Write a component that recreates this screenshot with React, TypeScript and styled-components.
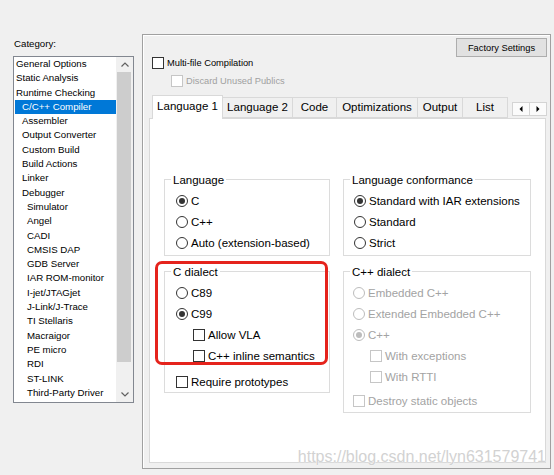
import React from "react";
import styled, { createGlobalStyle } from "styled-components";

const GlobalStyle = createGlobalStyle`
  html, body {
    margin: 0;
    padding: 0;
    background: #f0f0f0;
  }
  body {
    font-family: "Liberation Sans", Arial, sans-serif;
    color: #000;
  }
`;

const Window = styled.div`
  width: 554px;
  height: 475px;
  box-sizing: border-box;
  display: flex;
  padding-top: 34px;
  overflow: hidden;
  background: #f0f0f0;
`;

/* ---------- left category list ---------- */

const Sidebar = styled.div`
  width: 142px;
  flex: none;
  padding-left: 13px;
  box-sizing: border-box;
  display: flex;
  flex-direction: column;
`;

const CategoryLabel = styled.div`
  height: 22px;
  box-sizing: border-box;
  padding: 4px 0 0 1px;
  font-size: 9.7px;
  line-height: 12px;
`;

const ListBox = styled.div`
  width: 121px;
  height: 347px;
  box-sizing: border-box;
  border: 1px solid #828790;
  background: #fff;
  display: flex;
`;

const Items = styled.div`
  flex: 1;
  overflow: hidden;
`;

const Item = styled.div<{ $level: number; $selected?: boolean }>`
  height: 14.3px;
  line-height: 14.3px;
  margin-left: 1px;
  padding-left: ${(p) => 1 + p.$level * 6 - (p.$level === 2 ? 1 : 0)}px;
  font-size: 9.7px;
  white-space: nowrap;
  background: ${(p) => (p.$selected ? "#0078d7" : "transparent")};
  color: ${(p) => (p.$selected ? "#fff" : "#000")};
`;

const ScrollBar = styled.div`
  width: 17px;
  flex: none;
  background: #f0f0f0;
  display: flex;
  flex-direction: column;
`;

const ScrollArrow = styled.div`
  height: 15px;
  display: flex;
  align-items: center;
  justify-content: center;
  flex: none;
`;

const Thumb = styled.div`
  height: 290px;
  margin: 0 2px 0 1px;
  background: #cdcdcd;
  flex: none;
`;

const Track = styled.div`
  flex: 1;
`;

/* ---------- right options panel ---------- */

const Panel = styled.div`
  position: relative;
  width: 409px;
  height: 435px;
  box-sizing: border-box;
  border: 1px solid #a0a0a0;
  box-shadow: inset 1px 1px 0 #fff;
  padding: 3px 3px 0 6px;
  display: flex;
  flex-direction: column;
`;

const TopRow = styled.div`
  display: flex;
  justify-content: space-between;
  align-items: flex-start;
  padding-left: 3px;
`;

const TopOptions = styled.div`
  padding-top: 18px;
  display: flex;
  flex-direction: column;
  gap: 5px;
`;

const TopCheck = styled.label<{ $indent?: number; $disabled?: boolean }>`
  height: 13px;
  display: flex;
  align-items: center;
  gap: 3px;
  padding-left: ${(p) => p.$indent || 0}px;
  font-size: 9.3px;
  color: ${(p) => (p.$disabled ? "#a0a0a0" : "#000")};
`;

const FactoryButton = styled.button`
  width: 91px;
  height: 19px;
  box-sizing: border-box;
  border: 1px solid #adadad;
  background: #e1e1e1;
  font-family: "Liberation Sans", Arial, sans-serif;
  font-size: 9.3px;
  color: #000;
  padding: 0;
`;

const TabStrip = styled.div`
  position: relative;
  height: 23px;
  margin: 8px 1px 0 0;
  padding-left: 4px;
  display: flex;
  align-items: flex-end;
`;

const Tab = styled.div<{ $width: number; $active?: boolean }>`
  width: ${(p) => p.$width}px;
  height: ${(p) => (p.$active ? 24 : 21)}px;
  box-sizing: border-box;
  margin-left: -1px;
  margin-bottom: ${(p) => (p.$active ? -1 : 0)}px;
  position: relative;
  z-index: ${(p) => (p.$active ? 1 : 0)};
  border: 1px solid #d9d9d9;
  border-bottom: ${(p) => (p.$active ? "none" : "1px solid #d9d9d9")};
  background: ${(p) => (p.$active ? "#fff" : "#f0f0f0")};
  font-size: 11.5px;
  line-height: ${(p) => (p.$active ? 20 : 19)}px;
  text-align: center;
  white-space: nowrap;
  flex: none;
`;

const TabArrows = styled.div`
  position: absolute;
  right: -1px;
  top: 7px;
  display: flex;
  z-index: 2;
`;

const ArrowButton = styled.div`
  width: 18px;
  height: 14px;
  box-sizing: border-box;
  border: 1px solid #d4d4d4;
  margin-left: -1px;
  background: #fbfbfb;
  display: flex;
  align-items: center;
  justify-content: center;
`;

const Pane = styled.div`
  height: 345px;
  margin-right: 1px;
  box-sizing: border-box;
  border: 1px solid #d9d9d9;
  background: #fff;
  display: grid;
  grid-template-columns: 166px 188px;
  column-gap: 13px;
  align-items: start;
  padding: 60px 0 0 14px;
`;

const Column = styled.div`
  display: flex;
  flex-direction: column;
  gap: 15px;
`;

const Group = styled.div<{ $padBottom: number }>`
  position: relative;
  border: 1px solid #dcdcdc;
  display: flex;
  flex-direction: column;
  padding-bottom: ${(p) => p.$padBottom}px;
`;

const Legend = styled.div`
  align-self: flex-start;
  margin: -7px 0 3px 6px;
  padding: 0 2px;
  background: #fff;
  font-size: 11.5px;
  line-height: 14px;
`;

const Row = styled.label<{ $indent: number; $disabled?: boolean; $gapTop?: number }>`
  height: 21px;
  display: flex;
  align-items: center;
  gap: 3px;
  padding-left: ${(p) => p.$indent}px;
  margin-top: ${(p) => p.$gapTop || 0}px;
  font-size: 11.5px;
  white-space: nowrap;
  color: ${(p) => (p.$disabled ? "#a3a3a3" : "#000")};
`;

const RadioCircle = styled.span<{ $checked?: boolean; $disabled?: boolean }>`
  width: 12px;
  height: 12px;
  flex: none;
  box-sizing: border-box;
  border-radius: 50%;
  border: 1px solid ${(p) => (p.$disabled ? "#bcbcbc" : "#333")};
  background: #fff;
  display: flex;
  align-items: center;
  justify-content: center;
  &::after {
    content: "";
    display: ${(p) => (p.$checked ? "block" : "none")};
    width: 6px;
    height: 6px;
    border-radius: 50%;
    background: ${(p) => (p.$disabled ? "#bcbcbc" : "#333")};
  }
`;

const CheckBox = styled.span<{ $disabled?: boolean; $size?: number }>`
  width: ${(p) => p.$size || 12}px;
  height: ${(p) => p.$size || 12}px;
  flex: none;
  box-sizing: border-box;
  border: 1px solid ${(p) => (p.$disabled ? "#c6c6c6" : "#333")};
  background: #fff;
`;

const Highlight = styled.div`
  position: absolute;
  left: -10px;
  top: -11px;
  width: 173px;
  height: 104px;
  box-sizing: border-box;
  border: 3px solid #e5231c;
  border-radius: 7px;
  pointer-events: none;
`;

const Watermark = styled.div`
  position: absolute;
  right: 4px;
  bottom: 2px;
  font-size: 16px;
  line-height: 18px;
  color: #d2d2d2;
  text-shadow: 0 0 1px #fff, 0 0 1px #fff;
  white-space: nowrap;
  pointer-events: none;
`;

/* ---------- small drawings ---------- */

const Chevron: React.FC<{ up?: boolean }> = ({ up }) => (
  <svg width="8" height="5" viewBox="0 0 8 5">
    <path
      d={up ? "M0.5 4.5 L4 1 L7.5 4.5" : "M0.5 0.5 L4 4 L7.5 0.5"}
      fill="none"
      stroke="#606060"
      strokeWidth="1.2"
    />
  </svg>
);

const Triangle: React.FC<{ left?: boolean }> = ({ left }) => (
  <svg width="4" height="6" viewBox="0 0 4 6">
    <path d={left ? "M3.5 0 L0.5 3 L3.5 6 Z" : "M0.5 0 L3.5 3 L0.5 6 Z"} fill="#000" />
  </svg>
);

const Radio: React.FC<{ label: string; checked?: boolean; disabled?: boolean; indent: number }> = ({
  label,
  checked,
  disabled,
  indent,
}) => (
  <Row $indent={indent} $disabled={disabled}>
    <RadioCircle $checked={checked} $disabled={disabled} />
    {label}
  </Row>
);

const Check: React.FC<{ label: string; disabled?: boolean; indent: number; gapTop?: number }> = ({
  label,
  disabled,
  indent,
  gapTop,
}) => (
  <Row $indent={indent} $disabled={disabled} $gapTop={gapTop}>
    <CheckBox $disabled={disabled} />
    {label}
  </Row>
);

const categories: [string, number][] = [
  ["General Options", 0],
  ["Static Analysis", 0],
  ["Runtime Checking", 0],
  ["C/C++ Compiler", 1],
  ["Assembler", 1],
  ["Output Converter", 1],
  ["Custom Build", 1],
  ["Build Actions", 1],
  ["Linker", 1],
  ["Debugger", 1],
  ["Simulator", 2],
  ["Angel", 2],
  ["CADI", 2],
  ["CMSIS DAP", 2],
  ["GDB Server", 2],
  ["IAR ROM-monitor", 2],
  ["I-jet/JTAGjet", 2],
  ["J-Link/J-Trace", 2],
  ["TI Stellaris", 2],
  ["Macraigor", 2],
  ["PE micro", 2],
  ["RDI", 2],
  ["ST-LINK", 2],
  ["Third-Party Driver", 2],
];

const tabs: [string, number][] = [
  ["Language 1", 71],
  ["Language 2", 71],
  ["Code", 45],
  ["Optimizations", 82],
  ["Output", 46],
  ["List", 46],
];

export default function App() {
  return (
    <>
      <GlobalStyle />
      <Window>
        <Sidebar>
          <CategoryLabel>Category:</CategoryLabel>
          <ListBox>
            <Items>
              {categories.map(([name, level]) => (
                <Item key={name} $level={level} $selected={name === "C/C++ Compiler"}>
                  {name}
                </Item>
              ))}
            </Items>
            <ScrollBar>
              <ScrollArrow>
                <Chevron up />
              </ScrollArrow>
              <Thumb />
              <Track />
              <ScrollArrow>
                <Chevron />
              </ScrollArrow>
            </ScrollBar>
          </ListBox>
        </Sidebar>

        <Panel>
          <TopRow>
            <TopOptions>
              <TopCheck>
                <CheckBox $size={12} />
                Multi-file Compilation
              </TopCheck>
              <TopCheck $indent={19} $disabled>
                <CheckBox $size={12} $disabled />
                Discard Unused Publics
              </TopCheck>
            </TopOptions>
            <FactoryButton>Factory Settings</FactoryButton>
          </TopRow>

          <TabStrip>
            {tabs.map(([name, width], i) => (
              <Tab key={name} $width={width} $active={i === 0}>
                {name}
              </Tab>
            ))}
            <TabArrows>
              <ArrowButton>
                <Triangle left />
              </ArrowButton>
              <ArrowButton>
                <Triangle />
              </ArrowButton>
            </TabArrows>
          </TabStrip>

          <Pane>
            <Column>
              <Group $padBottom={2}>
                <Legend>Language</Legend>
                <Radio label="C" checked indent={11} />
                <Radio label="C++" indent={11} />
                <Radio label="Auto (extension-based)" indent={11} />
              </Group>
              <Group $padBottom={0}>
                <Legend>C dialect</Legend>
                <Radio label="C89" indent={11} />
                <Radio label="C99" checked indent={11} />
                <Check label="Allow VLA" indent={28} />
                <Check label="C++ inline semantics" indent={28} />
                <Check label="Require prototypes" indent={11} gapTop={5} />
                <Highlight />
              </Group>
            </Column>
            <Column>
              <Group $padBottom={2}>
                <Legend>Language conformance</Legend>
                <Radio label="Standard with IAR extensions" checked indent={10} />
                <Radio label="Standard" indent={10} />
                <Radio label="Strict" indent={10} />
              </Group>
              <Group $padBottom={1}>
                <Legend>C++ dialect</Legend>
                <Radio label="Embedded C++" disabled indent={9} />
                <Radio label="Extended Embedded C++" disabled indent={9} />
                <Radio label="C++" checked disabled indent={9} />
                <Check label="With exceptions" disabled indent={26} />
                <Check label="With RTTI" disabled indent={26} />
                <Check label="Destroy static objects" disabled indent={9} gapTop={3} />
              </Group>
            </Column>
          </Pane>

          <Watermark>https://blog.csdn.net/lyn631579741</Watermark>
        </Panel>
      </Window>
    </>
  );
}
